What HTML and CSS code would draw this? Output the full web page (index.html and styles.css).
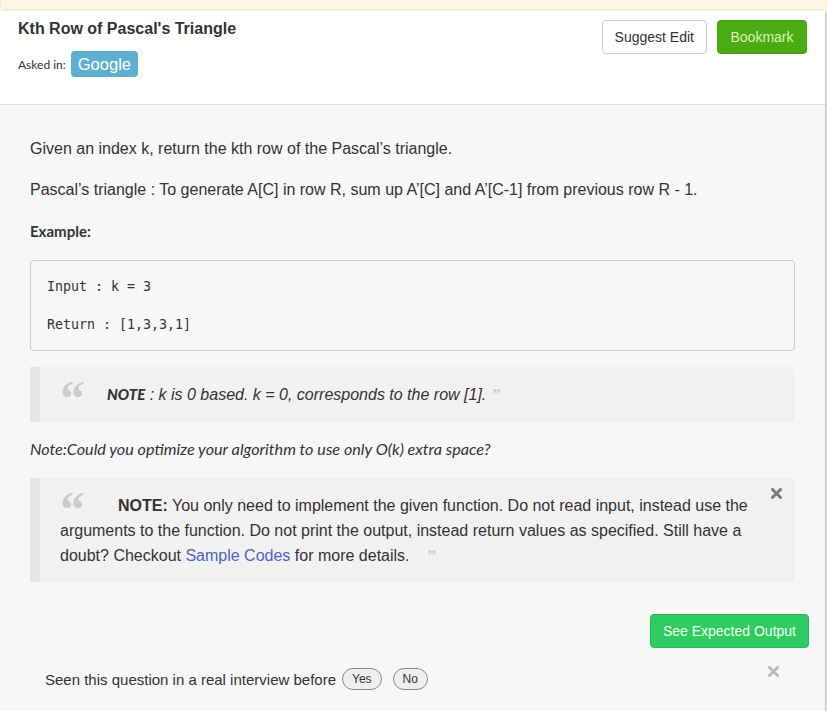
FILE: index.html
```html
<!DOCTYPE html>
<html>
<head>
<meta charset="utf-8">
<link rel="stylesheet" href="styles.css">
</head>
<body>
<div class="alert-strip"></div>
<div class="card">
  <div class="card-header">
    <div class="header-left">
      <h1 class="title">Kth Row of Pascal's Triangle</h1>
      <div class="asked">
        <span class="asked-label">Asked in:</span>
        <span class="company">Google</span>
      </div>
    </div>
    <div class="header-actions">
      <button class="btn btn-default">Suggest Edit</button>
      <button class="btn btn-bookmark">Bookmark</button>
    </div>
  </div>
  <div class="card-body">
    <p class="text">Given an index k, return the kth row of the Pascal’s triangle.</p>
    <p class="text">Pascal’s triangle : To generate A[C] in row R, sum up A’[C] and A’[C-1] from previous row R - 1.</p>
    <p class="example">Example:</p>
    <pre class="code">Input : k = 3

Return : [1,3,3,1]</pre>
    <blockquote class="quote"><span class="qopen">“</span><em><strong class="note-strong">NOTE</strong> : k is 0 based. k = 0, corresponds to the row [1].</em><span class="qclose">”</span></blockquote>
    <p class="italic-note">Note:Could you optimize your algorithm to use only O(k) extra space?</p>
    <blockquote class="quote quote-notice">
      <span class="qopen qopen-wide">“</span><strong>NOTE:</strong> You only need to implement the given function. Do not read input, instead use the arguments to the function. Do not print the output, instead return values as specified. Still have a doubt? Checkout <a class="link" href="#">Sample Codes</a> for more details.<span class="qclose qclose-wide">”</span>
      <span class="close-x dark"><svg width="11" height="11" viewBox="0 0 11 11"><path d="M1.5 1.5L9.5 9.5M9.5 1.5L1.5 9.5" stroke="currentColor" stroke-width="3" stroke-linecap="round"/></svg></span>
    </blockquote>
    <div class="output-row">
      <button class="btn btn-output">See Expected Output</button>
    </div>
    <div class="interview-row">
      <div class="interview-left">
        <span>Seen this question in a real interview before</span>
        <button class="pill">Yes</button>
        <button class="pill">No</button>
      </div>
      <span class="close-x light"><svg width="11" height="11" viewBox="0 0 11 11"><path d="M1.5 1.5L9.5 9.5M9.5 1.5L1.5 9.5" stroke="currentColor" stroke-width="3" stroke-linecap="round"/></svg></span>
    </div>
  </div>
</div>
</body>
</html>
```
FILE: styles.css
```css
* { box-sizing: border-box; }
body {
  margin: 0;
  background: #ffffff;
  font-family: "Liberation Sans", Arial, sans-serif;
  color: #333;
}
.alert-strip {
  height: 10px;
  background: #fcf8e3;
  border: 1px solid #faebcc;
  border-top: none;
  border-radius: 0 0 4px 4px;
}
.card {
  width: 825px;
  margin-top: 1px;
  background: #f7f7f7;
  box-shadow: 1px 1px 3px rgba(0,0,0,0.35);
}
.card-header {
  background: #fff;
  border-bottom: 1px solid #ddd;
  display: flex;
  justify-content: space-between;
  align-items: flex-start;
  padding: 8px 18px 26px 18px;
  height: 94px;
}
.title {
  margin: 0;
  font-size: 16px;
  line-height: 20px;
  font-weight: bold;
  color: #333;
}
.asked {
  display: flex;
  align-items: center;
  margin-top: 12px;
}
.asked-label {
  font-family: Lato, "Open Sans", sans-serif;
  font-size: 12px;
  color: #333;
  margin-right: 5px;
}
.company {
  background: #5eb0d0;
  color: #fff;
  font-size: 16.5px;
  line-height: 26px;
  height: 26px;
  padding: 0 7px;
  border-radius: 4px;
}
.header-actions {
  display: flex;
  gap: 10px;
  margin-top: 1px;
}
.btn {
  font-family: "Liberation Sans", Arial, sans-serif;
  font-size: 14px;
  line-height: 20px;
  padding: 6px 12.5px;
  border-radius: 4px;
  border: 1px solid #ccc;
  background: #fff;
  color: #333;
  cursor: pointer;
}
.btn-default { padding: 6px 12px; }
.btn-bookmark {
  background: #4bab13;
  border-color: #449c10;
  color: #dcf2b8;
}
.card-body {
  padding: 32px 30px 21px 30px;
}
.text {
  margin: 0 0 17px 0;
  font-size: 16px;
  line-height: 24px;
}
.example {
  margin: 0 0 17px 0;
  font-family: Lato, "Open Sans", sans-serif;
  font-weight: bold;
  font-size: 15px;
  line-height: 24px;
}
.code {
  margin: 0 0 16px 0;
  padding: 16px;
  border: 1px solid #ccc;
  border-radius: 4px;
  background: #f7f7f7;
  font-family: "DejaVu Sans Mono", monospace;
  font-size: 13.3px;
  line-height: 19px;
  color: #333;
  height: 91px;
}
.quote {
  position: relative;
  margin: 0;
  background: #f1f1f1;
  border-left: 10px solid #e6e6e6;
  border-radius: 0 4px 4px 0;
  padding: 15px 20px 15px 20px;
  font-size: 16px;
  line-height: 25px;
}
.qopen {
  font-family: "Liberation Serif", serif;
  font-weight: bold;
  font-size: 50px;
  line-height: 0;
  color: #ccc;
  vertical-align: -15px;
  margin-right: 22px;
}
.qopen-wide { margin-right: 33px; }
.qclose {
  font-family: "Liberation Serif", serif;
  font-weight: bold;
  font-size: 17px;
  line-height: 0;
  color: #ccc;
  margin-left: 6px;
}
.qclose-wide { margin-left: 18px; }
.note-strong {
  font-family: Lato, "Open Sans", sans-serif;
  font-weight: 900;
  font-size: 15px;
}
.italic-note {
  margin: 15px 0 17px 0;
  font-family: Lato, "Open Sans", sans-serif;
  font-style: italic;
  font-size: 16.2px;
  line-height: 24px;
}
.quote-notice {
  padding: 15px 42px 14px 20px;
}
.link {
  color: #4a63c9;
  text-decoration: none;
}
.close-x {
  display: flex;
}
.close-x.dark { position: absolute; color: #7a7a7a; right: 13px; top: 10px; }
.close-x.light { color: #bbb; margin-top: -2px; }
.output-row {
  display: flex;
  justify-content: flex-end;
  margin: 32px -14px 0 0;
}
.btn-output {
  padding: 6px 12px;
  background: #2ecb60;
  border-color: #27bb55;
  color: #f2fff2;
}
.interview-row {
  display: flex;
  justify-content: space-between;
  align-items: flex-start;
  margin-top: 20px;
  padding: 0 16px 0 15px;
}
.interview-left {
  display: flex;
  align-items: center;
  gap: 6px;
  font-size: 15px;
}
.pill {
  font-family: "Liberation Sans", Arial, sans-serif;
  font-size: 12px;
  height: 22px;
  padding: 0 9px;
  border: 1px solid #888;
  border-radius: 11px;
  background: #efefef;
  color: #333;
}
.pill + .pill { margin-left: 5px; }
```
